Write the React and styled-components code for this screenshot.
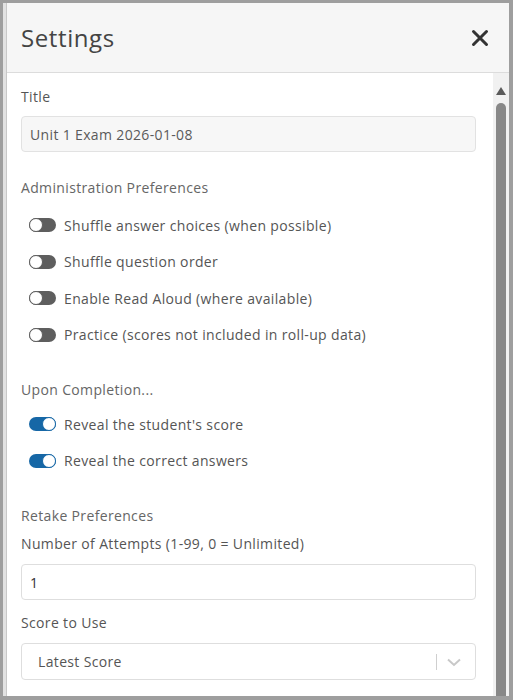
import React from "react";
import styled, { createGlobalStyle } from "styled-components";

const Global = createGlobalStyle`
  html, body { margin: 0; padding: 0; background: #9e9e9e; }
  * { box-sizing: border-box; }
`;

const Page = styled.div`
  width: 513px;
  height: 700px;
  background: #9e9e9e;
  padding: 3px 4px 4px 3px;
  display: flex;
  font-family: "Open Sans", "Lato", sans-serif;
`;

const Strip = styled.div`
  width: 4px;
  background: #e2e2e2;
  border-right: 1px solid #c8c8c8;
`;

const Panel = styled.div`
  flex: 1;
  background: #fff;
  display: flex;
  flex-direction: column;
  overflow: hidden;
`;

const Header = styled.div`
  height: 70px;
  flex: none;
  background: #f6f6f6;
  border-bottom: 1px solid #dcdcdc;
  display: flex;
  align-items: center;
  justify-content: space-between;
  padding: 0 20px 0 14px;
`;

const Title = styled.h1`
  margin: 0;
  font-weight: 400;
  font-size: 24px;
  color: #444;
  letter-spacing: 0.6px;
`;

const CloseButton = styled.button`
  border: 0;
  background: none;
  padding: 0;
  width: 18px;
  height: 18px;
  display: flex;
`;

const Body = styled.div`
  flex: 1;
  display: flex;
  min-height: 0;
`;

const Content = styled.div`
  flex: 1;
  padding: 14px 17px 0 14px;
  letter-spacing: 0.35px;
`;

const Label = styled.div`
  font-size: 14px;
  line-height: 20px;
  color: ${(p) => (p.$muted ? "#666" : "#555")};
  margin-top: ${(p) => p.$mt || 0}px;
  margin-bottom: ${(p) => p.$mb || 0}px;
`;

const TextField = styled.div`
  height: ${(p) => p.$h || 36}px;
  border: 1px solid ${(p) => (p.$disabled ? "#e2e2e2" : "#dedede")};
  background: ${(p) => (p.$disabled ? "#f7f7f7" : "#fff")};
  border-radius: 4px;
  display: flex;
  align-items: center;
  padding: 0 ${(p) => p.$pl || 8}px;
  font-size: 14px;
  color: ${(p) => (p.$disabled ? "#5a5a5a" : "#333")};
`;

const ToggleRow = styled.div`
  height: 36.5px;
  display: flex;
  align-items: center;
  padding-left: 8px;
  gap: 8px;
  font-size: 14px;
  color: #555;
`;

const Track = styled.span`
  position: relative;
  width: 27px;
  height: 14px;
  border-radius: 7px;
  background: ${(p) => (p.$on ? "#1667a6" : "#5e5e5e")};
  flex: none;
`;

const Knob = styled.span`
  position: absolute;
  top: 0;
  left: ${(p) => (p.$on ? "13px" : "0")};
  width: 14px;
  height: 14px;
  border-radius: 50%;
  background: #fff;
  border: 1.5px solid ${(p) => (p.$on ? "#1667a6" : "#5e5e5e")};
`;

const Group = styled.div`
  margin-top: ${(p) => p.$mt || 0}px;
`;

const Select = styled(TextField)`
  justify-content: space-between;
  padding-right: 12px;
  color: #555;
`;

const SelectIndicators = styled.div`
  display: flex;
  align-items: center;
  gap: 8px;
`;

const Sep = styled.span`
  width: 1px;
  height: 16px;
  background: #cfcfcf;
`;

const ScrollBar = styled.div`
  width: 16px;
  flex: none;
  background: #f1f1f1;
  display: flex;
  flex-direction: column;
  align-items: center;
  padding-top: 14px;
`;

const Arrow = styled.span`
  width: 0;
  height: 0;
  border-left: 5px solid transparent;
  border-right: 5px solid transparent;
  border-bottom: 8px solid #5a5a5a;
`;

const Thumb = styled.div`
  width: 10px;
  flex: 1;
  margin-top: 8px;
  border-radius: 5px 5px 0 0;
  background: #888;
`;

function Toggle({ on, children }) {
  return (
    <ToggleRow>
      <Track $on={on}>
        <Knob $on={on} />
      </Track>
      <span>{children}</span>
    </ToggleRow>
  );
}

export default function App() {
  return (
    <>
      <Global />
      <Page>
        <Strip />
        <Panel>
          <Header>
            <Title>Settings</Title>
            <CloseButton aria-label="Close">
              <svg width="18" height="18" viewBox="0 0 18 18">
                <path d="M2.5 2.5 L15.5 15.5 M15.5 2.5 L2.5 15.5" stroke="#333" strokeWidth="3" strokeLinecap="round" />
              </svg>
            </CloseButton>
          </Header>
          <Body>
            <Content>
              <Label $mb={9}>Title</Label>
              <TextField $disabled>Unit 1 Exam 2026-01-08</TextField>

              <Label $muted $mt={26} $mb={9}>Administration Preferences</Label>
              <Group>
                <Toggle>Shuffle answer choices (when possible)</Toggle>
                <Toggle>Shuffle question order</Toggle>
                <Toggle>Enable Read Aloud (where available)</Toggle>
                <Toggle>Practice (scores not included in roll-up data)</Toggle>
              </Group>

              <Label $muted $mt={27} $mb={6}>Upon Completion...</Label>
              <Group>
                <Toggle on>Reveal the student's score</Toggle>
                <Toggle on>Reveal the correct answers</Toggle>
              </Group>

              <Label $muted $mt={27}>Retake Preferences</Label>
              <Label $mt={8} $mb={10}>Number of Attempts (1-99, 0 = Unlimited)</Label>
              <TextField>1</TextField>

              <Label $mt={13} $mb={10}>Score to Use</Label>
              <Select $h={37} $pl={16}>
                <span>Latest Score</span>
                <SelectIndicators>
                  <Sep />
                  <svg width="18" height="18" viewBox="0 0 18 18">
                    <path d="M3 6.5 L9 12 L15 6.5" stroke="#c8c8c8" strokeWidth="2" fill="none" />
                  </svg>
                </SelectIndicators>
              </Select>
            </Content>
            <ScrollBar>
              <Arrow />
              <Thumb />
            </ScrollBar>
          </Body>
        </Panel>
      </Page>
    </>
  );
}
